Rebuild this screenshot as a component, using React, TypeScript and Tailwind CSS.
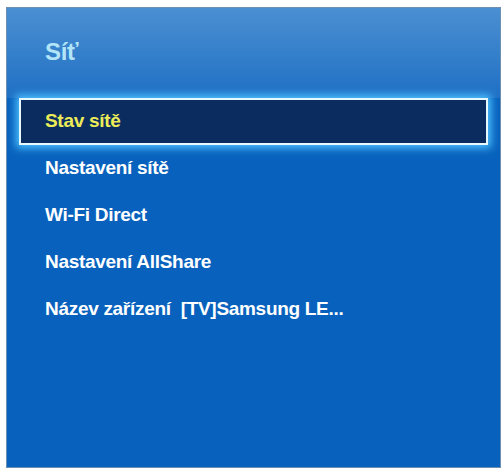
import React from "react";

const items = [
  "Nastavení sítě",
  "Wi-Fi Direct",
  "Nastavení AllShare",
  "Název zařízení\u00a0\u00a0[TV]Samsung LE...",
];

export default function App() {
  return (
    <div className="h-[473px] w-full bg-white pl-[6px] pt-[7px]">
      <div
        className="flex h-[461px] w-[495px] flex-col border border-[#6f8fb0] bg-[#0862bd]"
        style={{ fontFamily: '"Liberation Sans", Arial, sans-serif' }}
      >
        <div className="h-[90px] bg-gradient-to-b from-[#4b8fd2] via-[#3580cb] to-[#1e6fc5] pl-[38px] pt-[30px]">
          <div className="text-[24px] font-bold leading-[28px] tracking-[-0.3px] text-[#b2e4f8]">Síť</div>
        </div>
        <div className="flex flex-col px-[12px]">
          <div className="flex h-[47px] items-center border-2 border-[#e8f8ff] bg-[#0a2c5e] pl-[24px] shadow-[0_0_8px_3px_#4fc4ff]">
            <span className="text-[19px] font-bold tracking-[-0.3px] text-[#ecec58]">Stav sítě</span>
          </div>
          {items.map((label) => (
            <div key={label} className="flex h-[47px] items-center pl-[26px]">
              <span className="text-[19px] font-bold tracking-[-0.3px] text-white">{label}</span>
            </div>
          ))}
        </div>
      </div>
    </div>
  );
}
